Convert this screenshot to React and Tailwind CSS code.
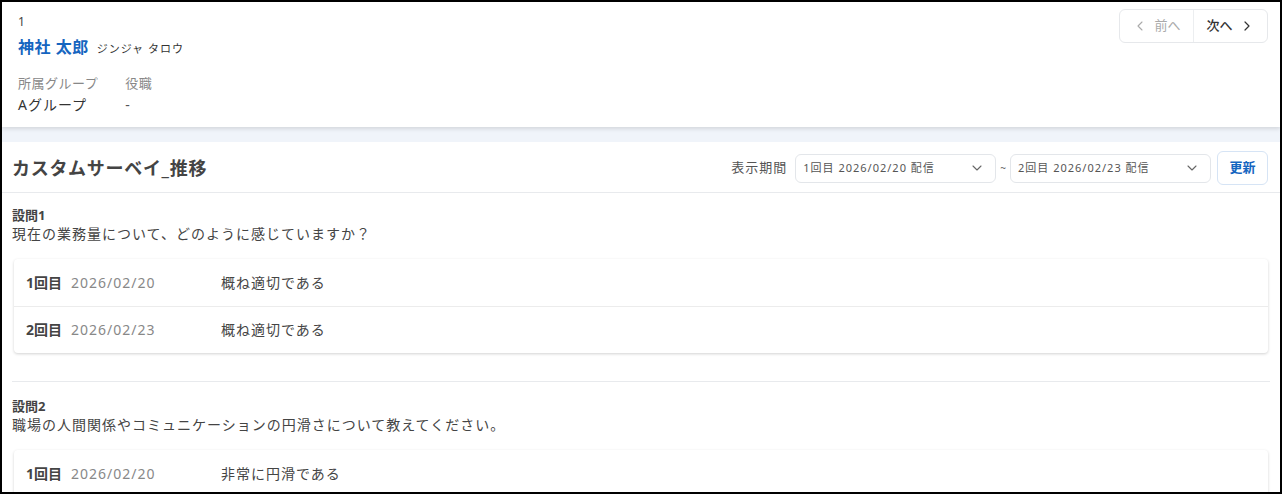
import { ChevronDown, ChevronLeft, ChevronRight } from 'lucide-react'

const font = { fontFamily: '"Noto Sans", "Noto Sans CJK JP", sans-serif' }

const questions = [
  {
    no: '設問1',
    text: '現在の業務量について、どのように感じていますか？',
    rows: [
      { round: '1回目', date: '2026/02/20', answer: '概ね適切である' },
      { round: '2回目', date: '2026/02/23', answer: '概ね適切である' },
    ],
  },
  {
    no: '設問2',
    text: '職場の人間関係やコミュニケーションの円滑さについて教えてください。',
    rows: [{ round: '1回目', date: '2026/02/20', answer: '非常に円滑である' }],
  },
]

function Select({ label }) {
  return (
    <div className="flex h-[29px] w-[201px] items-center justify-between rounded-md border border-[#e3e6ea] bg-white pl-[7px] pr-2.5">
      <span className="text-[11px] tracking-[1px] text-[#555]">{label}</span>
      <ChevronDown className="h-4 w-4 text-[#666]" strokeWidth={1.6} />
    </div>
  )
}

export default function App() {
  return (
    <div style={font} className="box-border h-[494px] w-[1282px] overflow-hidden border-2 border-black bg-[#f0f4fa]">
      <div className="flex justify-between bg-white px-4 pb-[12px] pt-3 shadow-[0_2px_4px_rgba(0,0,0,0.12)]">
        <div>
          <div className="text-xs leading-4 text-[#444]">1</div>
          <div className="mt-[5px] flex items-baseline gap-2">
            <span className="text-[16px] font-bold tracking-[0.5px] text-[#1565c0]">神社 太郎</span>
            <span className="text-[11px] tracking-[1px] text-[#333]">ジンジャ タロウ</span>
          </div>
          <div className="mt-[15px] flex gap-[27px]">
            <div>
              <div className="text-[13px] tracking-[0.5px] text-[#888]">所属グループ</div>
              <div className="text-[14px] tracking-[1px] text-[#333]">Aグループ</div>
            </div>
            <div>
              <div className="text-[13px] tracking-[0.5px] text-[#888]">役職</div>
              <div className="text-[14px] text-[#555]">-</div>
            </div>
          </div>
        </div>
        <div className="mr-[-4px] mt-[-5px] flex h-[34px] rounded-md border border-[#e6e8eb]">
          <div className="flex w-[73px] items-center justify-center gap-1.5 text-[13px] text-[#aaa]">
            <ChevronLeft className="h-4 w-4" strokeWidth={1.6} />
            前へ
          </div>
          <div className="w-px bg-[#eceef0]" />
          <div className="flex w-[73px] items-center justify-center gap-1.5 text-[13px] font-medium text-[#333]">
            次へ
            <ChevronRight className="h-4 w-4" strokeWidth={1.8} />
          </div>
        </div>
      </div>

      <div className="mt-[15px] bg-white">
        <div className="flex h-[51px] items-center justify-between border-b border-[#e8eaed] pl-[10px] pr-3 pt-[3px]">
          <div className="text-[18px] font-bold tracking-[0.7px] text-[#444]">カスタムサーベイ_推移</div>
          <div className="flex items-center">
            <span className="mr-2 text-[13px] tracking-[1px] text-[#555]">表示期間</span>
            <Select label="1回目 2026/02/20 配信" />
            <span className="mx-[4px] text-[10px] text-[#666]">~</span>
            <Select label="2回目 2026/02/23 配信" />
            <div className="ml-[6px] flex h-[34px] w-[51px] items-center justify-center rounded-md border border-[#d6e4f5] text-[13px] font-bold text-[#1565c0]">
              更新
            </div>
          </div>
        </div>

        <div className="px-[10px] pt-[13px]">
          {questions.map((q, i) => (
            <div key={q.no} className={i > 0 ? 'mt-[28px] border-t border-[#e8eaed] pt-[15px]' : ''}>
              <div className="text-[13px] font-bold leading-[18px] text-[#444]">{q.no}</div>
              <div className="text-[14px] leading-[20px] tracking-[1px] text-[#444]">{q.text}</div>
              <div className="mx-[2px] mt-[15px] rounded-sm bg-white shadow-[0_1px_3px_rgba(0,0,0,0.18)]">
                {q.rows.map((r, j) => (
                  <div key={r.round} className={'flex h-[47px] items-center px-[12px] ' + (j > 0 ? 'border-t border-[#ececec]' : '')}>
                    <span className="w-[45px] text-[14px] font-bold text-[#444]">{r.round}</span>
                    <span className="w-[150px] text-[14px] tracking-[1px] text-[#888]">{r.date}</span>
                    <span className="text-[14px] tracking-[1px] text-[#444]">{r.answer}</span>
                  </div>
                ))}
              </div>
            </div>
          ))}
        </div>
      </div>
    </div>
  )
}
